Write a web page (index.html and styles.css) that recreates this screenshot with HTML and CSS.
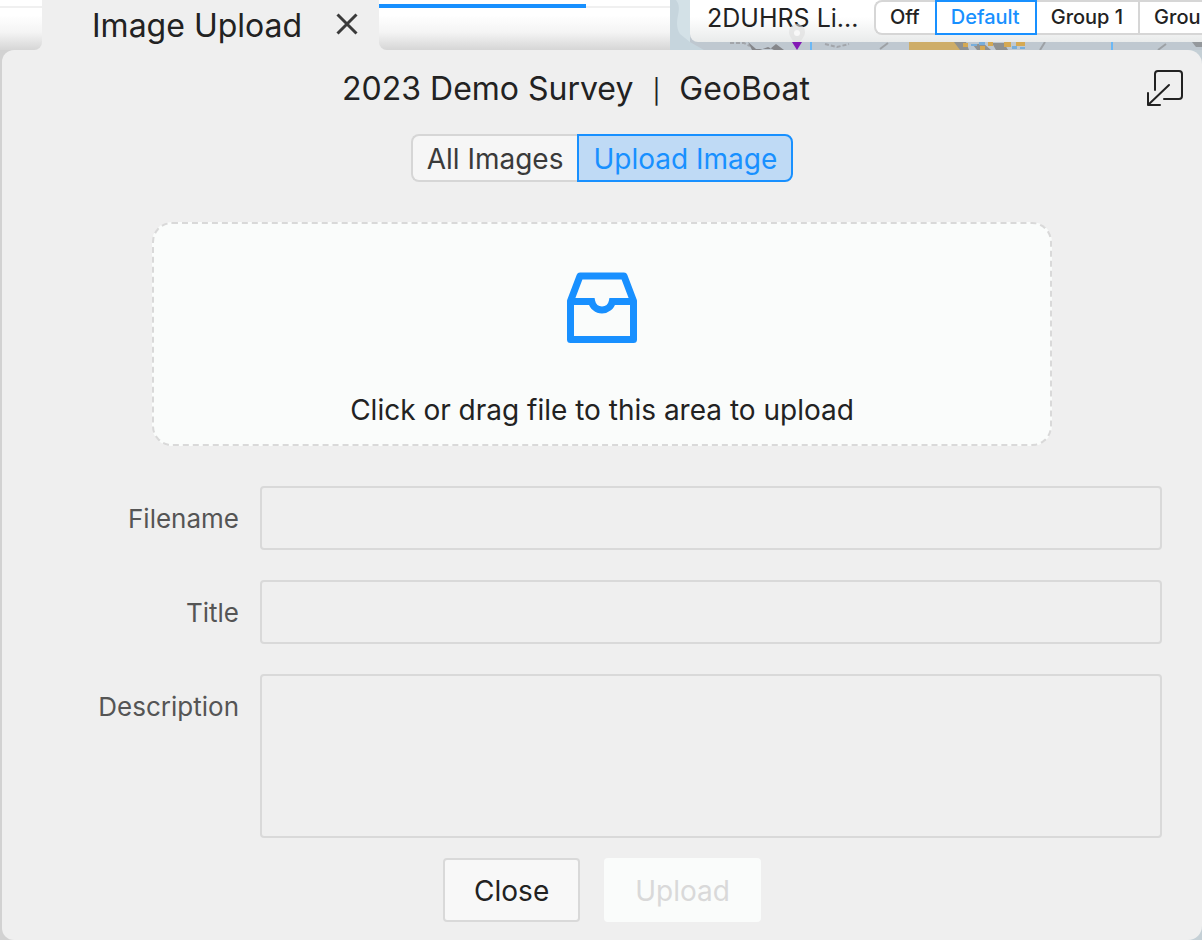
FILE: index.html
```html
<!DOCTYPE html>
<html lang="en">
<head>
    <meta charset="UTF-8">
    <meta name="viewport" content="width=device-width, initial-scale=1.0">
    <title>Image Upload</title>
    <link rel="stylesheet" href="styles.css">
</head>
<body>
    <header class="topbar">
        <div class="topbar-start"></div>
        <div class="tab">
            <span class="tab-title">Image Upload</span>
            <button class="tab-close" type="button" aria-label="Close tab">
                <svg width="22" height="22" viewBox="0 0 22 22"><path d="M1.500 1.500L20.500 20.500M20.500 1.500L1.500 20.500"/></svg>
            </button>
        </div>
        <div class="tab-rest"><div class="ink-bar"></div></div>
        <div class="map">
            <svg class="map-tiles" viewBox="0 0 532 50" preserveAspectRatio="xMinYMin slice">
                <rect width="532" height="50" fill="#bfc8d0"/>
                <path d="M0 0h20v42l14 8H0z" fill="#c6d5dd"/>
                <path d="M6 0c8 10-4 20 4 34l10 8V0z" fill="#d3e1e7"/>
                <path d="M60 43h14l6 3M155 44l12 3 12-3" fill="none" stroke="#a2a5aa" stroke-width="2" stroke-dasharray="4 2"/>
                <path d="M78 42l8 7h14l6-5 8 6h-10l-6-3-8 3h-8z" fill="#85868a"/>
                <path d="M210 49l8-6" stroke="#9da1a5" stroke-width="2"/>
                <path d="M239 40h45l10 10h-55z" fill="#cead68"/>
                <path d="M284 42h12l3 8h-9zM303 45l10-2 8 7h-14zM322 43h12l4 7h-12z" fill="#8f9190"/>
                <path d="M293 43h5v4h-5zM310 46h5v4h-5zM318 42h5v4h-5zM334 42h7v5h-7zM346 42h9v4h-9z" fill="#d5a953"/>
                <path d="M301 44h6v2h-6zM309 42h6v3h-6zM342 46h5v3h-5zM350 47h5v2h-5z" fill="#78aedb"/>
                <path d="M370 50l5-8M488 50l8-6" fill="none" stroke="#9da1a5" stroke-width="2"/>
                <path d="M522 42h10v5h-6z" fill="#94989c"/>
                <path d="M141 40v10M442 36v14" stroke="#6bb8f5" stroke-width="2"/>
            </svg>
            <div class="layer-panel">
                <span class="layer-name">2DUHRS Li...</span>
                <div class="segments segments-small" role="radiogroup" aria-label="2DUHRS lines">
                    <input type="radio" name="layer" id="layer-off"><label for="layer-off">Off</label>
                    <input type="radio" name="layer" id="layer-default" checked><label for="layer-default">Default</label>
                    <input type="radio" name="layer" id="layer-1"><label for="layer-1">Group 1</label>
                    <input type="radio" name="layer" id="layer-2"><label for="layer-2">Grou</label>
                </div>
            </div>
            <svg class="map-pin" width="18" height="26" viewBox="0 0 18 26">
                <path d="M9 24C7 17 1 14 1 8a8 8 0 0116 0c0 6-6 9-8 16z" fill="#dedede" opacity=".6"/>
                <circle cx="9" cy="9" r="3" fill="#f8f8f8"/>
                <path d="M4 18h10l-5 8z" fill="#8319b5"/>
            </svg>
        </div>
    </header>

    <main class="dialog">
        <div class="dialog-header">
            <h1>2023 Demo Survey <span class="divider">|</span> GeoBoat</h1>
            <button class="popout" type="button" aria-label="Pop out">
                <svg width="38" height="38" viewBox="0 0 38 38"><path d="M9 20V4Q9 1 12 1H33Q36 1 36 4V26Q36 29 33 29H18M23 15L2 35M2 23V35H14"/></svg>
            </button>
        </div>

        <div class="segments segments-main" role="radiogroup" aria-label="View">
            <input type="radio" name="view" id="view-all"><label for="view-all">All Images</label>
            <input type="radio" name="view" id="view-upload" checked><label for="view-upload">Upload Image</label>
        </div>

        <button class="dropzone" type="button">
            <svg width="70" height="72" viewBox="0 0 70 72">
                <path d="M3.500 29L13 4H57L66.500 29V67.500H3.500Z"/>
                <path class="tray" d="M3.500 29.500H24.700A10.500 10.500 0 0045.300 29.500H66.500"/>
            </svg>
            <span>Click or drag file to this area to upload</span>
        </button>

        <form class="fields">
            <label for="filename">Filename</label>
            <input type="text" id="filename">
            <label for="title">Title</label>
            <input type="text" id="title">
            <label for="description">Description</label>
            <textarea id="description"></textarea>
        </form>

        <div class="actions">
            <button class="btn" type="button">Close</button>
            <button class="btn btn-disabled" type="button" disabled>Upload</button>
        </div>
    </main>
</body>
</html>
```
FILE: styles.css
```css
* {
    box-sizing: border-box;
}

body {
    margin: 0;
    min-height: 100vh;
    display: flex;
    flex-direction: column;
    overflow: hidden;
    background: linear-gradient(90deg, #d2d2d2 50%, #c5d0d6 50%);
    color: #222;
    font-family: Inter, "Liberation Sans", sans-serif;
}

button {
    font-family: inherit;
    color: inherit;
    padding: 0;
    border: 0;
    background: none;
}

/* top strip */
.topbar {
    display: flex;
    height: 50px;
    background: #efefef;
}

.topbar-start {
    width: 42px;
    border-radius: 0 0 8px 0;
    background: linear-gradient(#f0f0f0, #f0f0f0) 0 6px / 100% 2px no-repeat,
        linear-gradient(#fff 30%, #f4f4f4 65%, #d6d6d6);
}

.tab {
    width: 337px;
    display: flex;
    align-items: center;
    justify-content: space-between;
    padding: 0 21px 2px 50px;
    border-radius: 8px 8px 0 0;
    font-size: 32px;
    line-height: 52px;
    white-space: nowrap;
}

.tab-title {
    padding-top: 4px;
}

.tab-close {
    display: flex;
}

.tab-close svg {
    fill: none;
    stroke: #3a3a3a;
    stroke-width: 3;
}

.tab-rest {
    width: 291px;
    padding-top: 4px;
    border-radius: 0 0 0 8px;
    background: linear-gradient(#f0f0f0, #f0f0f0) 0 6px / 100% 2px no-repeat,
        linear-gradient(#fff 30%, #f4f4f4 65%, #d6d6d6);
}

.ink-bar {
    width: 207px;
    height: 4px;
    background: #1890ff;
}

.map {
    position: relative;
    flex: 1;
    min-width: 0;
    padding-left: 20px;
    overflow: hidden;
}

.map-tiles {
    position: absolute;
    inset: 0;
    width: 100%;
    height: 50px;
}

.layer-panel {
    position: relative;
    display: flex;
    height: 42px;
    padding-left: 17px;
    border-radius: 0 0 0 8px;
    background: linear-gradient(#fff 40%, #e9ebeb);
    white-space: nowrap;
}

.layer-name {
    flex: 0 0 167px;
    font-size: 25px;
    line-height: 36px;
}

.map-pin {
    position: absolute;
    left: 118px;
    top: 24px;
}

/* radio groups */
.segments {
    display: flex;
}

.segments input {
    position: absolute;
    opacity: 0;
}

.segments label {
    border: 2px solid #d6d6d6;
    border-right-width: 0;
    background: #f6f6f6;
    color: #3a3a3a;
    white-space: nowrap;
}

.segments label:first-of-type {
    border-radius: 8px 0 0 8px;
}

.segments label:last-of-type {
    border-right-width: 2px;
    border-radius: 0 8px 8px 0;
}

.segments input:checked + label {
    border: 2px solid #1890ff;
    background: #bfdaf5;
    color: #1890ff;
}

.segments input:checked + label + input + label {
    border-left-width: 0;
}

.segments-small label {
    height: 35px;
    padding: 0 15px 0 14px;
    background: #fff;
    color: #222;
    font-size: 20px;
    font-weight: 500;
    line-height: 31px;
}

.segments-small label:last-of-type {
    border-right-width: 0;
    border-radius: 0;
}

.segments-small input:checked + label {
    background: #fff;
}

.segments-main {
    align-self: center;
    margin-top: 6px;
}

.segments-main label {
    height: 48px;
    padding: 0 14px;
    font-size: 28px;
    line-height: 46px;
}

/* dialog */
.dialog {
    flex: 1;
    display: flex;
    flex-direction: column;
    margin-left: 2px;
    padding-bottom: 18px;
    border-radius: 12px 14px 14px 12px;
    background: #efefef;
}

.dialog-header {
    display: flex;
    align-items: center;
    height: 78px;
    padding-right: 18px;
}

.dialog-header h1 {
    flex: 1;
    margin: 0;
    padding: 2px 0 0 4px;
    font-size: 32px;
    font-weight: 400;
    line-height: 40px;
    text-align: center;
}

.divider {
    margin: 0 10px;
    font-size: 24px;
}

.popout {
    display: flex;
}

.popout svg {
    fill: none;
    stroke: #222;
    stroke-width: 2;
    stroke-linecap: round;
    stroke-linejoin: round;
}

.dropzone {
    display: flex;
    flex-direction: column;
    align-items: center;
    height: 224px;
    margin: 40px 150px 0;
    padding-top: 48px;
    border: 2px dashed #d9d9d9;
    border-radius: 20px;
    background: #fafcfb;
    font-size: 28px;
}

.dropzone svg {
    fill: none;
    stroke: #1890ff;
    stroke-width: 7;
    stroke-linejoin: round;
}

.dropzone .tray {
    stroke-linejoin: miter;
}

.dropzone span {
    margin-top: 48px;
    line-height: 36px;
}

.fields {
    display: grid;
    grid-template-columns: 237px 1fr;
    gap: 30px 21px;
    margin: 40px 40px 0 0;
}

.fields label {
    color: #555;
    font-size: 26px;
    line-height: 66px;
    height: 64px;
    text-align: right;
}

.fields input,
.fields textarea {
    width: 100%;
    height: 64px;
    margin: 0;
    padding: 8px 20px;
    border: 2px solid #d9d9d9;
    border-radius: 4px;
    background: #efefef;
    color: #222;
    font: 26px Inter, sans-serif;
    resize: none;
}

.fields textarea {
    height: 164px;
}

.actions {
    display: flex;
    justify-content: center;
    gap: 24px;
    margin-top: 20px;
}

.btn {
    height: 64px;
    padding: 2px 29px 0;
    border: 2px solid #d9d9d9;
    border-radius: 4px;
    background: #f8f8f8;
    font-size: 28px;
}

.btn-disabled {
    border-color: #fafcfb;
    background: #fafcfb;
    color: #d9d9d9;
}
```
